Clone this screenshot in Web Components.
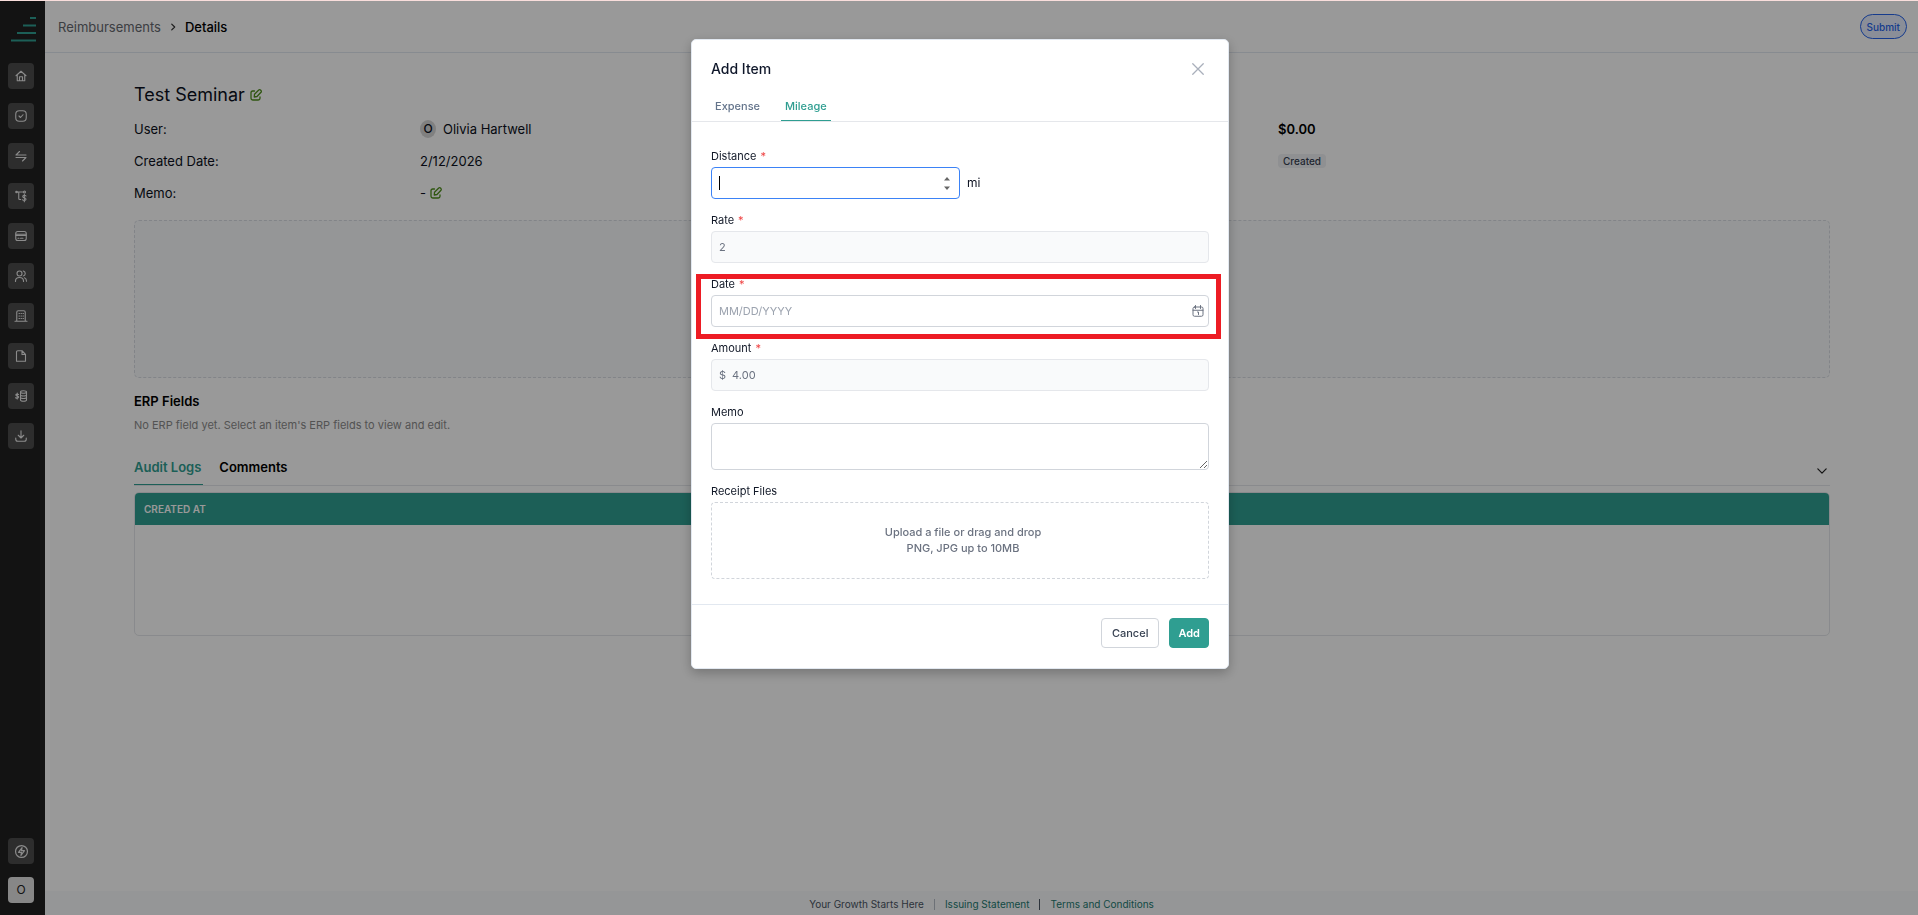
<!DOCTYPE html>
<html lang="en">
<head>
<meta charset="utf-8">
<meta name="viewport" content="width=device-width, initial-scale=1">
<title>Reimbursement details</title>
<style>
  html, body { margin: 0; height: 100%; }
  body {
    --teal: #2f9e91;
    --line: #e5e7eb;
    --muted: #6b7280;
    font: 13px/20px Inter, "Liberation Sans", sans-serif;
    color: #0b1020;
    background: #fff;
  }
</style>
</head>
<body>
<reimb-app></reimb-app>

<script>
const define = (name, html, setup) => {
  const template = document.createElement('template');
  template.innerHTML = html;
  customElements.define(name, class extends HTMLElement {
    connectedCallback() {
      if (this.shadowRoot) return;
      const root = this.attachShadow({ mode: 'open' });
      root.append(template.content.cloneNode(true));
      if (setup) setup(this, root);
    }
  });
};

/* Icons, all on a 24 unit grid */
const ICONS = {
  home: '<path d="M2 11.500 12 2.500l10 9M4.500 10v11.500h15V10M9 21.500v-8h6v8"/>',
  check: '<rect x="1.500" y="1.500" width="21" height="21" rx="7"/><path d="m8 12 3 3 5-5.500"/>',
  swap: '<path d="M22 10H2l7-7M2 15h20l-7 7"/>',
  flow: '<path d="M3 4h14M7.500 4v13q0 2 2 2h2"/><circle cx="3" cy="4" r="1.500"/><circle cx="19" cy="4" r="2"/><path d="M22 12q-1-1.500-3.500-1.500-3 0-3 2.500 0 2 3.200 2.500 3.300.500 3.300 3 0 2.500-3.300 2.500Q16 21 15 19.500M18.700 8.500v15"/>',
  card: '<rect x="1.500" y="3" width="21" height="18" rx="4"/><path d="M2 8.500h20M2 11h20M6 16.500h2M11 16.500h5"/>',
  users: '<circle cx="9" cy="7" r="5"/><path d="M1 23v-1q0-7 8-7t8 7v1M16.500 2q4 1 4 5t-4 5M19 15.500q4 1.500 4 7"/>',
  building: '<path d="M0 22.500h24M3.500 22V4.500q0-3 3-3h11q3 0 3 3V22"/><path d="M8 7h1M12 7h1M16 7h1M8 12h1M12 12h1M16 12h1M8 17h1M12 17h1M16 17h1"/>',
  file: '<path d="M14 1.500H5.500Q3 1.500 3 4v18.500h18V9zM14 1.500V9h7"/>',
  coins: '<ellipse cx="17" cy="4" rx="6" ry="2.500"/><path d="M11 4v16q0 2.500 6 2.500t6-2.500V4M11 9.500q0 2.500 6 2.500t6-2.500M11 14.500q0 2.500 6 2.500t6-2.500M7 9q-3-2-5 0-1 2.500 2.500 3t2.500 3q-2 2.500-6 .500M4.500 6v12"/>',
  download: '<path d="M12 1.500v14M6.500 10.500l5.500 5.500 5.500-5.500M1.500 16v2.500q0 4 4 4h13q4 0 4-4V16"/>',
  bolt: '<circle cx="12" cy="12" r="11"/><path d="M13 5 6.500 13.500H12L11 19l6.500-8.500H12z"/>',
  edit: '<path d="M9 4H5.500Q2 4 2 7.500V18.500Q2 22 5.500 22h11q3.500 0 3.500-3.500V16M8.500 16l.500-5.500L17.500 2q2-1.500 4 .500t.500 4L14 15z"/>',
  chevron: '<path d="m9 5 7 7-7 7"/>',
  down: '<path d="m2 7 10 10L22 7"/>',
  close: '<path d="M1.500 1.500 22.500 22.500M22.500 1.500 1.500 22.500"/>',
  calendar: '<rect x="2" y="4" width="20" height="18.500" rx="3"/><path d="M2 10.500h20M7 1v6M17 1v6M11 14h2v5"/>'
};

define('ui-icon', `
  <style>
    :host { display: inline-block; width: 12px; height: 12px; flex: none; }
    svg { display: block; width: 100%; height: 100%; overflow: visible; fill: none; stroke: currentColor;
          stroke-width: var(--stroke, 2); stroke-linecap: round; stroke-linejoin: round; }
  </style>
  <svg viewBox="0 0 24 24" aria-hidden="true"></svg>`,
  (host, root) => { root.querySelector('svg').innerHTML = ICONS[host.getAttribute('name')]; });

define('nav-button', `
  <style>
    :host { display: block; }
    button { display: grid; place-items: center; width: 26px; height: 26px; padding: 0; border: 0;
             border-radius: 4px; background: #4c4c4c; color: #e8e8e8; font: inherit; }
    ui-icon { --stroke: 2.2; }
    :host([avatar]) button { background: #e2e2e2; color: #222; font-size: 12px; }
    :host([large]) ui-icon { width: 13px; height: 13px; }
  </style>
  <button type="button"><slot></slot></button>`,
  (host, root) => {
    const name = host.getAttribute('icon');
    if (name) {
      const icon = document.createElement('ui-icon');
      icon.setAttribute('name', name);
      root.querySelector('button').append(icon);
    }
    root.querySelector('button').setAttribute('aria-label', host.getAttribute('label'));
  });

define('side-bar', `
  <style>
    :host { display: flex; flex-direction: column; justify-content: space-between; align-items: center;
            box-sizing: border-box; padding: 16px 3px 12px 0; background: #212121; }
    nav, .foot { display: flex; flex-direction: column; align-items: center; gap: 14px; }
    .foot { gap: 13px; }
    .logo { display: block; width: 25px; height: 26px; margin: 0 0 6px 4px; }
  </style>
  <nav aria-label="Main">
    <svg class="logo" viewBox="0 0 25 26" fill="#2f9e91" aria-hidden="true">
      <path d="M19 0h6v2h-6zM12 7.500h13v2H12zM6 15h19v2H6zM0 22.500h25v2H0z"/>
    </svg>
    <nav-button icon="home" label="Home"></nav-button>
    <nav-button icon="check" label="Approvals"></nav-button>
    <nav-button icon="swap" label="Transactions"></nav-button>
    <nav-button icon="flow" label="Payment flows"></nav-button>
    <nav-button icon="card" label="Cards"></nav-button>
    <nav-button icon="users" label="Users"></nav-button>
    <nav-button icon="building" label="Company"></nav-button>
    <nav-button icon="file" label="Documents"></nav-button>
    <nav-button icon="coins" label="Reimbursements"></nav-button>
    <nav-button icon="download" label="Exports"></nav-button>
  </nav>
  <div class="foot">
    <nav-button icon="bolt" large label="Quick actions"></nav-button>
    <nav-button avatar label="Account">O</nav-button>
  </div>`);

define('top-bar', `
  <style>
    :host { display: flex; align-items: center; justify-content: space-between; height: 51px;
            padding: 0 11px 0 13px; border-bottom: 1px solid #e2e8f0; font-weight: 500; }
    nav { display: flex; align-items: center; gap: 7px; color: #000; }
    a { color: #64686f; text-decoration: none; font-weight: 400; }
    ui-icon { width: 10px; height: 10px; --stroke: 3; color: #333; }
    button { height: 25px; padding: 0 6px; border: 1px solid #2563eb; border-radius: 13px;
             background: #e6edfd; color: #2563eb; font: 500 10px/14px Inter, sans-serif; }
  </style>
  <nav aria-label="Breadcrumb"><a href="#">Reimbursements</a><ui-icon name="chevron"></ui-icon><span>Details</span></nav>
  <button type="button">Submit</button>`);

define('detail-summary', `
  <style>
    :host { display: block; }
    h1 { display: flex; align-items: center; gap: 5px; margin: 0 0 4px; font-size: 18px; line-height: 28px; font-weight: 400; }
    .grid { display: grid; grid-template-columns: repeat(6, 1fr); column-gap: 20px; grid-auto-rows: 32px; align-items: center; }
    .value { grid-column: 2 / 4; display: flex; align-items: center; gap: 4px; }
    .right { grid-column: 5 / 7; }
    .edit { display: block; padding: 0; border: 0; background: none; color: #4f8f1c; }
    .edit ui-icon { display: block; --stroke: 2.6; }
    .avatar { width: 16px; height: 18px; margin-right: 3px; border-radius: 50%; background: #d6d6d6; text-align: center;
              font-size: 12px; line-height: 18px; font-weight: 500; }
    strong { font-weight: 600; color: #000; }
    .badge { justify-self: start; padding: 0 5px; border-radius: 4px; background: #eef0f4; color: #374151; font-size: 10px; line-height: 14px; font-weight: 500; }
  </style>
  <h1>Test Seminar <button class="edit" type="button" aria-label="Edit title"><ui-icon name="edit"></ui-icon></button></h1>
  <div class="grid">
    <span>User:</span>
    <span class="value"><span class="avatar">O</span>Olivia Hartwell</span>
    <strong class="right">$0.00</strong>
    <span>Created Date:</span>
    <span class="value">2/12/2026</span>
    <span class="badge right">Created</span>
    <span>Memo:</span>
    <span class="value">- <button class="edit" type="button" aria-label="Edit memo"><ui-icon name="edit"></ui-icon></button></span>
  </div>`);

define('audit-panel', `
  <style>
    :host { display: block; }
    .tabs { display: flex; align-items: stretch; gap: 16px; border-bottom: 1px solid var(--line); }
    .tabs button { height: 28px; padding: 0 2px 8px 0; border: 0; background: none; color: #000;
                   font: 600 13px/20px Inter, sans-serif; }
    .tabs .active { color: var(--teal); border-bottom: 1px solid var(--teal); padding-bottom: 7px; }
    .tabs .fold { margin-left: auto; padding: 0 3px 0 0; }
    .fold ui-icon { width: 10px; height: 10px; --stroke: 3; display: block; color: #222; }
    .box { margin-top: 6px; height: 142px; border: 1px solid var(--line); border-radius: 5px; overflow: hidden; }
    table { width: 100%; border-collapse: collapse; }
    th { height: 32px; padding: 0 9px; background: var(--teal); color: #fff; text-align: left;
         font: 600 10px/14px Inter, sans-serif; }
  </style>
  <div class="tabs">
    <button class="active" type="button">Audit Logs</button>
    <button type="button">Comments</button>
    <button class="fold" type="button" aria-label="Collapse"><ui-icon name="down"></ui-icon></button>
  </div>
  <div class="box"><table><thead><tr><th scope="col">CREATED AT</th></tr></thead></table></div>`);

define('page-footer', `
  <style>
    :host { display: flex; justify-content: center; align-items: center; gap: 10px; padding: 6px 0 4px;
            background: #f8fafc; color: #4b5563; font-size: 10px; line-height: 14px; }
    a { color: #237a70; text-decoration: none; }
    i { width: 1px; height: 11px; background: #b6bcc6; }
    i.dark { background: #4b5563; }
  </style>
  <span>Your Growth Starts Here</span><i></i><a href="#">Issuing Statement</a><i class="dark"></i><a href="#">Terms and Conditions</a>`);

define('form-field', `
  <style>
    :host { display: block; }
    label { display: block; margin-bottom: 2px; font-size: 11px; line-height: 18px; color: #111827; }
    em { color: #ef4444; font-style: normal; margin-left: 4px; }
    .row { display: flex; align-items: center; gap: 7px; font-size: 11px; }
    .control { box-sizing: border-box; display: flex; align-items: center; flex: 1; height: 32px; padding: 0 4px 0 7px;
               border: 1px solid #d1d5db; border-radius: 4px; background: #fff; }
    input, textarea { flex: 1; min-width: 0; padding: 0; border: 0; outline: 0; background: none; color: var(--muted);
            font: 11px/20px Inter, sans-serif; appearance: textfield; }
    input::-webkit-inner-spin-button { appearance: none; margin: 0; }
    input::placeholder { color: #9ca3af; }
    ui-icon { color: #6b7280; }
    textarea { display: block; width: 100%; box-sizing: border-box; height: 47px; padding: 6px 7px; border: 1px solid #d1d5db; border-radius: 4px; }
    :host([readonly]) .control { background: #f9fafb; border-color: var(--line); }
    .prefix { margin-right: 6px; color: var(--muted); }
    :host([unit]) .control { flex: 0 0 50%; border-color: #3b82f6; }
    :host([unit]) .row { font-size: 12px; }
    :host([unit]) input { caret-color: transparent; }
    .caret { width: 1px; height: 14px; background: #000; }
    .spin { width: 6px; height: 13px; margin-right: 5px; }
  </style>
  <label for="control"></label>
  <div class="row"></div>`,
  (host, root) => {
    const get = name => host.getAttribute(name);
    const label = root.querySelector('label');
    label.textContent = get('label');
    if (host.hasAttribute('required')) label.insertAdjacentHTML('beforeend', '<em>*</em>');
    const row = root.querySelector('.row');
    if (get('type') === 'textarea') { row.innerHTML = '<textarea id="control"></textarea>'; return; }
    row.innerHTML = '<div class="control"><input id="control"></div>';
    const box = row.firstChild, input = box.firstChild;
    input.type = get('type') || 'text';
    input.value = get('value') || '';
    input.placeholder = get('placeholder') || '';
    input.readOnly = host.hasAttribute('readonly');
    if (get('prefix')) box.insertAdjacentHTML('afterbegin', `<span class="prefix">${get('prefix')}</span>`);
    if (get('icon')) box.insertAdjacentHTML('beforeend', `<ui-icon name="${get('icon')}"></ui-icon>`);
    if (get('unit')) {
      box.insertAdjacentHTML('afterbegin', '<span class="caret"></span>');
      box.insertAdjacentHTML('beforeend', '<svg class="spin" viewBox="0 0 6 13" fill="#666" aria-hidden="true"><path d="M0 3.500 3 0l3 3.500zM0 9.500h6L3 13z"/></svg>');
      row.insertAdjacentHTML('beforeend', `<span>${get('unit')}</span>`);
    }
  });

define('file-drop', `
  <style>
    :host { display: block; }
    .title { display: block; margin-bottom: 2px; font-size: 11px; line-height: 18px; color: #111827; }
    .drop { box-sizing: border-box; display: flex; flex-direction: column; align-items: center;
            height: 77px; padding: 21px 0 0 6px; border: 1px dashed #d1d5db; border-radius: 4px;
            color: var(--muted); font-size: 11px; line-height: 16px; font-weight: 500; }
  </style>
  <span class="title">Receipt Files</span>
  <div class="drop"><span>Upload a file or drag and drop</span><span>PNG, JPG up to 10MB</span></div>`);

define('item-dialog', `
  <style>
    :host { display: block; box-sizing: border-box; width: 538px; max-width: 100%; border: 1px solid #e2e8f0; border-radius: 5px;
            background: #fff; box-shadow: 0 4px 12px rgba(0, 0, 0, .25); }
    header { display: flex; justify-content: space-between; align-items: center; padding: 19px 24px 17px 19px; }
    h2 { margin: 0; font-size: 14px; line-height: 20px; font-weight: 500; color: #0f172a; }
    button { font: 500 12px/20px Inter, sans-serif; }
    .close { padding: 0; border: 0; background: none; color: #a9afbb; }
    .close ui-icon { display: block; --stroke: 2.6; }
    .tabs { display: flex; gap: 17px; padding: 0 19px; border-bottom: 1px solid var(--line); }
    .tabs button { height: 25px; padding: 0 4px 5px; border: 0; border-bottom: 1px solid transparent; background: none;
                   font-size: 11px; line-height: 18px; color: #64748b; }
    .tabs .active { color: var(--teal); border-color: var(--teal); }
    form { display: grid; gap: 12px; padding: 25px 19px; }
    .marked { position: relative; }
    .mark { position: absolute; inset: -1px -12px -12px -15px; border: 5px solid #ed1c24; pointer-events: none; }
    footer { display: flex; justify-content: flex-end; gap: 10px; padding: 13px 19px 20px; border-top: 1px solid #e2e8f0; }
    footer button { height: 30px; padding: 0 10px; border: 1px solid #d1d5db; border-radius: 4px; background: #fff; color: #374151; font-size: 11px; }
    footer .primary { padding: 0 8px; border-color: var(--teal); background: var(--teal); color: #fff; font-weight: 600; }
  </style>
  <header><h2>Add Item</h2><button class="close" type="button" aria-label="Close"><ui-icon name="close"></ui-icon></button></header>
  <div class="tabs"><button type="button">Expense</button><button class="active" type="button">Mileage</button></div>
  <form>
    <form-field label="Distance" required type="number" unit="mi"></form-field>
    <form-field label="Rate" required value="2" readonly></form-field>
    <div class="marked"><form-field label="Date" required placeholder="MM/DD/YYYY" icon="calendar"></form-field><div class="mark"></div></div>
    <form-field label="Amount" required value="4.00" prefix="$" readonly></form-field>
    <form-field label="Memo" type="textarea"></form-field>
    <file-drop></file-drop>
  </form>
  <footer><button type="button">Cancel</button><button class="primary" type="button">Add</button></footer>`);

define('reimb-app', `
  <style>
    :host { display: grid; grid-template-columns: 45px 1fr; box-sizing: border-box; min-height: 100vh; padding-top: 1px; background: #f9dedc; }
    .page { display: flex; flex-direction: column; background: #fff; }
    main { flex: 1; padding: 28px 88px 0 89px; }
    .empty { height: 156px; margin-top: 11px; border: 1px dashed #d9dde3; border-radius: 5px; background: #f8fafc; }
    h3 { margin: 13px 0 4px; font-size: 13px; line-height: 20px; font-weight: 600; color: #000; }
    p { margin: 0 0 22px; font-size: 11px; line-height: 20px; color: #8b8b8b; }
    .overlay { position: fixed; inset: 1px 0 0; display: flex; justify-content: center; align-items: flex-start;
               padding: 38px 0 0 2px; background: rgba(0, 0, 0, .4); }
  </style>
  <side-bar></side-bar>
  <div class="page">
    <top-bar></top-bar>
    <main>
      <detail-summary></detail-summary>
      <div class="empty"></div>
      <h3>ERP Fields</h3>
      <p>No ERP field yet. Select an item's ERP fields to view and edit.</p>
      <audit-panel></audit-panel>
    </main>
    <page-footer></page-footer>
  </div>
  <div class="overlay"><item-dialog role="dialog" aria-label="Add Item"></item-dialog></div>`);
</script>
</body>
</html>
